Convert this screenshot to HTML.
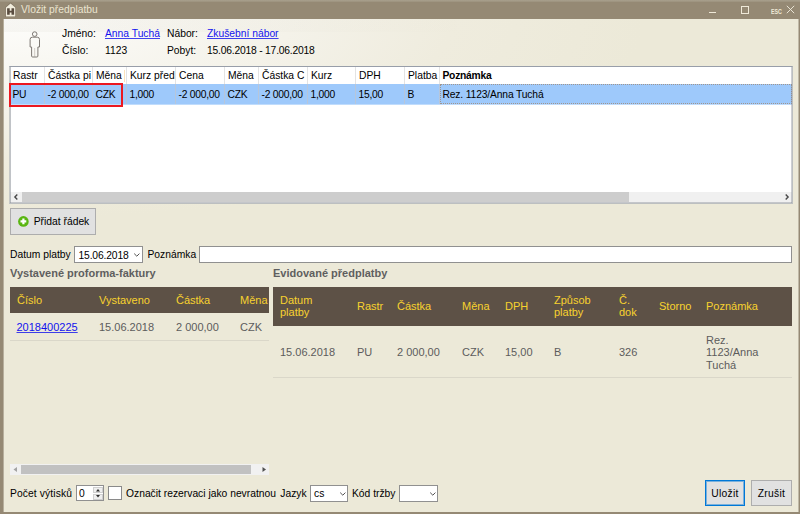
<!DOCTYPE html>
<html><head><meta charset="utf-8"><title>Vložit předplatbu</title>
<style>
*{box-sizing:border-box;margin:0;padding:0}
html,body{width:800px;height:514px;overflow:hidden}
body{position:relative;background:#958974;font-family:"Liberation Sans",sans-serif;font-size:10.3px;color:#000}
.abs{position:absolute}
#topline{left:0;top:0;width:800px;height:2px;background:linear-gradient(#a9a08e,#9c917d)}
#title .t{left:21px;top:2.600px;font-size:10.3px;color:#ebe4cf;line-height:14px;white-space:nowrap}
#content{left:4px;top:19px;width:794px;height:493px;background:#ece9d8}
#edgeL{left:3px;top:19px;width:1px;height:493px;background:#b7af9d}
#edgeR{left:798px;top:19px;width:1px;height:493px;background:#c0b9a7}
#hdr{left:4px;top:19px;width:794px;height:260px;background:radial-gradient(ellipse 640px 200px at 0 0,#fdfdfb 0%,#f9f8f3 20%,#f4f2e9 45%,#efecde 70%,#ece9d8 100%)}
#hdr2{left:4px;top:19px;width:794px;height:13px;background:linear-gradient(to right,rgba(110,100,70,0.045),rgba(110,100,70,0) 60%)}
.lbl{position:absolute;white-space:nowrap;line-height:12px;font-size:10.3px}
a{color:#1212ee;text-decoration:underline;text-decoration-thickness:1px;text-decoration-color:rgba(18,18,238,0.8)}
#grid{left:9px;top:66px;width:784px;height:138px;background:#fff;border:1px solid;border-color:#989ea9 #bcbfc0 #bcbfc0 #c6c8c6}
#grid .hrow{left:0;top:0;width:782px;height:17px;background:#fff}
#grid .srow{left:0;top:17px;width:782px;height:20px;background:#9ec9fb;box-shadow:0 1px 0 rgba(158,201,251,0.65)}
.gc{position:absolute;top:0;height:100%;white-space:nowrap;overflow:hidden;padding-left:3px;font-size:10.3px}
.hrow .gc{line-height:17px;border-right:1px solid #e3e3e3}
.srow .gc{line-height:21px;letter-spacing:-0.25px;padding-left:2.500px;border-right:1px solid #b7c6da}
#red{left:9px;top:83px;width:114px;height:24px;border:2px solid #ec1820}
.sbh{background:#f0f0f0}
.btn{position:absolute;background:#e1e1e1;border:1px solid #adadad;font-size:10.3px;text-align:center;white-space:nowrap}
.inp{position:absolute;background:#fff;border:1px solid #909090}
.sec{position:absolute;font-weight:bold;color:#5f5f5f;font-size:11px;white-space:nowrap;line-height:13px}
.th{position:absolute;background:#5d5146}
.th span,.td span{position:absolute;white-space:nowrap}
.th span{color:#f8d22e;font-size:11px;line-height:12.5px}
.td span{color:#5c5c5c;font-size:11px;line-height:12.5px}
.td{position:absolute;border-bottom:1px solid #dad7c9}
</style></head><body>
<div class="abs" id="topline"></div>
<div class="abs" id="title" style="left:0;top:0;width:800px;height:19px">
 <svg class="abs" style="left:4px;top:2px" width="14" height="16" viewBox="4 2 14 16"><path d="M5.200 7.200 L10.600 2.600 L16 7.200 V17.100 H5.200 Z" fill="#7f7461"/><path d="M5.900 7.500 L10.600 3.500 L15.300 7.500 V16.400 H5.900 Z" fill="#f1ecdc"/><path d="M7.100 8.300 H9.700 V10.800 H11.500 V8.300 H14.100 V14.800 H11.500 V12.600 H9.700 V14.800 H7.100 Z" fill="#5a4d40"/></svg>
 <div class="abs t">Vložit předplatbu</div>
 <div class="abs" style="left:709px;top:12px;width:7px;height:1px;background:#efe9d8"></div>
 <div class="abs" style="left:741px;top:6px;width:8px;height:8px;border:1px solid #efe9d8"></div>
 <div class="abs" style="left:770.500px;top:8px;font-size:7px;line-height:7px;color:#efe9d8;font-weight:bold;transform:scaleX(0.76);transform-origin:0 0">ESC</div>
 <svg class="abs" style="left:786px;top:5px" width="9" height="9" viewBox="0 0 9 9"><path d="M0.800 0.800 L8.200 8.200 M8.200 0.800 L0.800 8.200" stroke="#f3eee0" stroke-width="0.9" fill="none"/></svg>
</div>
<div class="abs" id="content"></div>
<div class="abs" id="edgeL"></div><div class="abs" id="edgeR"></div>
<div class="abs" id="hdr"></div><div class="abs" id="hdr2"></div>
<svg class="abs" style="left:25px;top:28.600px" width="20" height="32" viewBox="25 28 20 32"><circle cx="34.700" cy="33.100" r="2.300" fill="none" stroke="#7d7873" stroke-width="1"/><path d="M34.700 47 V55.500" stroke="#cfcbc4" stroke-width="1" fill="none"/><path d="M32.300 36.200 H37.300 Q39.500 36.200 39.500 38.400 V46 H37.900 V55 Q37.900 56 36.900 56 H32.600 Q31.600 56 31.600 55 V46 H30.100 V38.400 Q30.100 36.200 32.300 36.200 Z" fill="none" stroke="#7d7873" stroke-width="1"/></svg>
<div class="lbl" style="left:62px;top:27.700px">Jméno:</div>
<div class="lbl" style="left:105px;top:27.700px"><a>Anna Tuchá</a></div>
<div class="lbl" style="left:167px;top:27.700px">Nábor:</div>
<div class="lbl" style="left:207px;top:27.700px"><a>Zkušební nábor</a></div>
<div class="lbl" style="left:62px;top:44.500px">Číslo:</div>
<div class="lbl" style="left:105px;top:44.500px">1123</div>
<div class="lbl" style="left:167px;top:44.500px">Pobyt:</div>
<div class="lbl" style="left:207px;top:44.500px;letter-spacing:-0.2px">15.06.2018 - 17.06.2018</div>

<div class="abs" id="grid">
 <div class="abs hrow">
  <div class="gc" style="left:0;width:35px">Rastr</div>
  <div class="gc" style="left:35px;width:48px">Částka pi</div>
  <div class="gc" style="left:83px;width:34px">Měna</div>
  <div class="gc" style="left:117px;width:49px">Kurz před</div>
  <div class="gc" style="left:166px;width:49px">Cena</div>
  <div class="gc" style="left:215px;width:34px">Měna</div>
  <div class="gc" style="left:249px;width:49px">Částka C</div>
  <div class="gc" style="left:298px;width:48px">Kurz</div>
  <div class="gc" style="left:346px;width:49px">DPH</div>
  <div class="gc" style="left:395px;width:35px">Platba</div>
  <div class="gc" style="left:430px;width:352px;font-weight:bold;border-right:0;letter-spacing:-0.25px;padding-left:2.500px">Poznámka</div>
  <div class="abs" style="left:114px;top:3px;width:1px;height:12px;background:#fbe3bd"></div>
 </div>
 <div class="abs srow">
  <div class="gc" style="left:0;width:35px">PU</div>
  <div class="gc" style="left:35px;width:48px">-2 000,00</div>
  <div class="gc" style="left:83px;width:34px">CZK</div>
  <div class="gc" style="left:117px;width:49px">1,000</div>
  <div class="gc" style="left:166px;width:49px">-2 000,00</div>
  <div class="gc" style="left:215px;width:34px">CZK</div>
  <div class="gc" style="left:249px;width:49px">-2 000,00</div>
  <div class="gc" style="left:298px;width:48px">1,000</div>
  <div class="gc" style="left:346px;width:49px">15,00</div>
  <div class="gc" style="left:395px;width:35px">B</div>
  <div class="gc" style="left:430px;width:352px;border-right:0;border:1px dotted #a0958e;padding-left:1.500px;line-height:19px;letter-spacing:-0.15px">Rez. 1123/Anna Tuchá</div>
 </div>
 <div class="abs sbh" style="left:0;top:125px;width:782px;height:11px">
  <div class="abs" style="left:12px;top:0;width:607px;height:10px;background:#cdcdcd"></div>
  <svg class="abs" style="left:3px;top:1px" width="6" height="8" viewBox="0 0 6 8"><path d="M4.300 1.600 L1.900 4 L4.300 6.400" stroke="#484848" stroke-width="1.400" fill="none"/></svg>
  <svg class="abs" style="left:773.500px;top:1px" width="6" height="8" viewBox="0 0 6 8"><path d="M1.700 1.600 L4.100 4 L1.700 6.400" stroke="#484848" stroke-width="1.400" fill="none"/></svg>
 </div>
 <div class="abs" style="left:0;top:0;width:1px;height:136px;background:rgba(130,135,144,0.5)"></div>
 <div class="abs" style="left:781px;top:0;width:1px;height:136px;background:rgba(130,135,144,0.4)"></div>
 <div class="abs" style="left:0;top:135px;width:782px;height:1px;background:rgba(130,135,144,0.4)"></div>
</div>
<div class="abs" id="red"></div>

<div class="btn" style="left:10px;top:208px;width:86px;height:27px;line-height:25px;padding-left:17px">Přidat řádek</div>
<svg class="abs" style="left:17.500px;top:215.500px" width="11" height="11" viewBox="0 0 11 11"><circle cx="5.400" cy="5.400" r="5.300" fill="#5ab612"/><path d="M5.400 2.500 V8.300 M2.500 5.400 H8.300" stroke="#fff" stroke-width="2.200"/></svg>

<div class="lbl" style="left:10px;top:249px">Datum platby</div>
<div class="inp" style="left:74px;top:246px;width:69px;height:17px"><span class="lbl" style="left:3.500px;top:2.500px;letter-spacing:-0.15px">15.06.2018</span>
 <svg class="abs" style="left:58px;top:5px" width="8" height="6" viewBox="0 0 8 6"><path d="M1.200 1.600 L3.800 4.200 L6.400 1.600" stroke="#505050" stroke-width="1" fill="none"/></svg></div>
<div class="lbl" style="left:147.500px;top:249px">Poznámka</div>
<div class="inp" style="left:199px;top:246px;width:593px;height:17px"></div>

<div class="sec" style="left:10px;top:266.500px">Vystavené proforma-faktury</div>
<div class="sec" style="left:273px;top:266.500px">Evidované předplatby</div>

<div class="th" style="left:10px;top:287px;width:259px;height:26px">
 <span style="left:7px;top:6.500px">Číslo</span><span style="left:89px;top:6.500px">Vystaveno</span><span style="left:166px;top:6.500px">Částka</span><span style="left:230px;top:6.500px">Měna</span>
</div>
<div class="td" style="left:10px;top:313px;width:259px;height:28px">
 <span style="left:6.500px;top:7.500px"><a>2018400225</a></span><span style="left:89px;top:7.500px">15.06.2018</span><span style="left:166px;top:7.500px">2 000,00</span><span style="left:230px;top:7.500px">CZK</span>
</div>

<div class="th" style="left:273px;top:287px;width:519px;height:39px">
 <span style="left:7px;top:6.500px">Datum<br>platby</span><span style="left:84px;top:12.500px">Rastr</span><span style="left:124px;top:12.500px">Částka</span><span style="left:189px;top:12.500px">Měna</span><span style="left:232px;top:12.500px">DPH</span><span style="left:281px;top:6.500px">Způsob<br>platby</span><span style="left:346px;top:6.500px">Č.<br>dok</span><span style="left:386px;top:12.500px">Storno</span><span style="left:433px;top:12.500px">Poznámka</span>
</div>
<div class="td" style="left:273px;top:326px;width:519px;height:52px">
 <span style="left:7px;top:20px">15.06.2018</span><span style="left:84px;top:20px">PU</span><span style="left:124px;top:20px">2 000,00</span><span style="left:189px;top:20px">CZK</span><span style="left:232px;top:20px">15,00</span><span style="left:281px;top:20px">B</span><span style="left:346px;top:20px">326</span><span style="left:433px;top:7.500px">Rez.<br>1123/Anna<br>Tuchá</span>
</div>

<div class="abs sbh" style="left:10px;top:464px;width:259px;height:11px;background:#f1f1f1">
 <div class="abs" style="left:11px;top:1px;width:230px;height:9px;background:#c1c1c1"></div>
 <svg class="abs" style="left:3px;top:3px" width="5" height="5" viewBox="0 0 5 5"><path d="M4 0 L0.500 2.500 L4 5 Z" fill="#a3a3a3"/></svg>
 <svg class="abs" style="left:252px;top:3px" width="5" height="5" viewBox="0 0 5 5"><path d="M0.500 0 L4 2.500 L0.500 5 Z" fill="#505050"/></svg>
</div>

<div class="lbl" style="left:10px;top:487.500px;letter-spacing:0.1px">Počet výtisků</div>
<div class="inp" style="left:76px;top:485px;width:28px;height:16px"><span class="lbl" style="left:2px;top:1.800px">0</span>
 <div class="abs" style="left:16px;top:0.500px;width:10px;height:6.500px;background:#efefef;border:1px solid #cfcfcf"></div>
 <div class="abs" style="left:16px;top:7.500px;width:10px;height:6.500px;background:#efefef;border:1px solid #cfcfcf"></div>
 <svg class="abs" style="left:19px;top:2.700px" width="4" height="3" viewBox="0 0 4 3"><path d="M0 2.500 L2 0 L4 2.500 Z" fill="#2a2a2a"/></svg>
 <svg class="abs" style="left:19px;top:9px" width="4" height="3" viewBox="0 0 4 3"><path d="M0 0 L2 2.500 L4 0 Z" fill="#2a2a2a"/></svg>
</div>
<div class="inp" style="left:108px;top:486px;width:14px;height:14px;border-color:#8a8a8a"></div>
<div class="lbl" style="left:126px;top:487.500px;letter-spacing:0">Označit rezervaci jako nevratnou</div>
<div class="lbl" style="left:280.300px;top:487.500px">Jazyk</div>
<div class="inp" style="left:310px;top:485px;width:38px;height:17px"><span class="lbl" style="left:3px;top:1.500px">cs</span>
 <svg class="abs" style="left:28px;top:5px" width="8" height="6" viewBox="0 0 8 6"><path d="M1.200 1.600 L3.800 4.200 L6.400 1.600" stroke="#505050" stroke-width="1" fill="none"/></svg></div>
<div class="lbl" style="left:352px;top:487.500px">Kód tržby</div>
<div class="inp" style="left:399px;top:485px;width:39px;height:17px">
 <svg class="abs" style="left:29px;top:5px" width="8" height="6" viewBox="0 0 8 6"><path d="M1.200 1.600 L3.800 4.200 L6.400 1.600" stroke="#505050" stroke-width="1" fill="none"/></svg></div>

<div class="btn" style="left:705px;top:480px;width:40px;height:26px;line-height:25px;border:1px solid #0078d7;box-shadow:inset 0 0 0 1px rgba(0,120,215,0.45);letter-spacing:0.300px">Uložit</div>
<div class="btn" style="left:751px;top:480px;width:41px;height:26px;line-height:25px;letter-spacing:0.300px">Zrušit</div>
</body></html>
